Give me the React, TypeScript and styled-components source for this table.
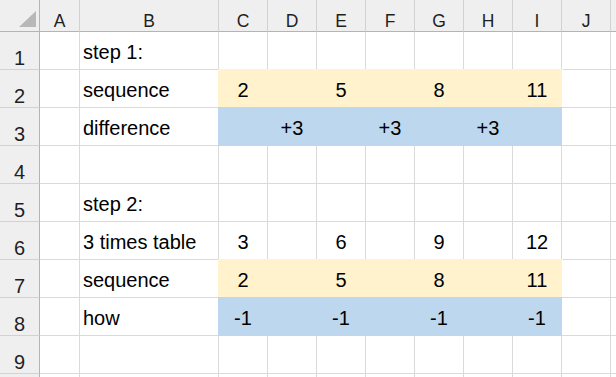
import React from 'react';
import styled, { createGlobalStyle } from 'styled-components';

const GlobalStyle = createGlobalStyle`
  html, body {
    margin: 0;
    padding: 0;
    background: #ffffff;
    overflow: hidden;
  }
  body {
    font-family: "Liberation Sans", Arial, sans-serif;
  }
`;

const GRID = '#dadada';
const HEAD_BG = '#efefef';
const HEAD_LINE = '#d2d2d2';
const HEAD_EDGE = '#b4b4b4';

const fills = {
  yellow: '#fff2cc',
  blue: '#bdd7ee',
};

type Fill = keyof typeof fills;

const Sheet = styled.div`
  display: grid;
  grid-template-columns: 40px 40px 139px repeat(9, 49px);
  grid-template-rows: 32px repeat(10, 38px);
  width: 616px;
  height: 377px;
  overflow: hidden;
  color: #000;
`;

const Corner = styled.div`
  display: flex;
  align-items: flex-start;
  justify-content: flex-start;
  background: ${HEAD_BG};
  border-right: 1px solid ${HEAD_EDGE};
  border-bottom: 1px solid ${HEAD_EDGE};
  box-sizing: border-box;

  svg {
    display: block;
  }
`;

const ColHead = styled.div`
  display: flex;
  align-items: flex-end;
  justify-content: center;
  padding-bottom: 1px;
  box-sizing: border-box;
  background: ${HEAD_BG};
  border-right: 1px solid ${HEAD_LINE};
  border-bottom: 1px solid ${HEAD_EDGE};
  font-size: 17.5px;
  line-height: 17.5px;
  color: #1f1f1f;
`;

const RowHead = styled.div`
  display: flex;
  align-items: flex-end;
  justify-content: center;
  padding-bottom: 1px;
  box-sizing: border-box;
  background: ${HEAD_BG};
  border-right: 1px solid ${HEAD_EDGE};
  border-bottom: 1px solid ${HEAD_LINE};
  font-size: 20px;
  line-height: 20px;
  color: #1f1f1f;
`;

const Cell = styled.div<{ $fill?: Fill; $center?: boolean }>`
  display: flex;
  align-items: flex-end;
  justify-content: ${({ $center }) => ($center ? 'center' : 'flex-start')};
  padding: 0 0 7px ${({ $center }) => ($center ? '0' : '3px')};
  box-sizing: border-box;
  white-space: nowrap;
  font-size: 20px;
  line-height: 20px;
  background: ${({ $fill }) => ($fill ? fills[$fill] : '#ffffff')};
  border-right: 1px solid ${({ $fill }) => ($fill ? fills[$fill] : GRID)};
  border-bottom: 1px solid ${({ $fill }) => ($fill ? fills[$fill] : GRID)};
  box-shadow: ${({ $fill }) => ($fill ? `0 0 0 1px ${fills[$fill]}` : 'none')};
`;

const columns = ['A', 'B', 'C', 'D', 'E', 'F', 'G', 'H', 'I', 'J', 'K'];

interface RowData {
  label?: string;
  values?: Record<string, string>;
  fill?: Fill;
}

const rows: RowData[] = [
  { label: 'step 1:' },
  { label: 'sequence', values: { C: '2', E: '5', G: '8', I: '11' }, fill: 'yellow' },
  { label: 'difference', values: { D: '+3', F: '+3', H: '+3' }, fill: 'blue' },
  {},
  { label: 'step 2:' },
  { label: '3 times table', values: { C: '3', E: '6', G: '9', I: '12' } },
  { label: 'sequence', values: { C: '2', E: '5', G: '8', I: '11' }, fill: 'yellow' },
  { label: 'how', values: { C: '-1', E: '-1', G: '-1', I: '-1' }, fill: 'blue' },
  {},
  {},
];

const filled = ['C', 'D', 'E', 'F', 'G', 'H', 'I'];

export default function App() {
  return (
    <>
      <GlobalStyle />
      <Sheet>
        <Corner>
          <svg width="39" height="31" viewBox="0 0 39 31">
            <polygon points="19,27 36,27 36,11" fill="#b8b8b8" />
          </svg>
        </Corner>
        {columns.map((c) => (
          <ColHead key={c}>{c === 'K' ? '' : c}</ColHead>
        ))}
        {rows.map((row, i) => (
          <React.Fragment key={i}>
            {/* the last row only peeks in at the bottom edge, its number is out of view */}
            <RowHead>{i < 9 ? i + 1 : ''}</RowHead>
            {columns.map((c) => {
              if (c === 'B') return <Cell key={c}>{row.label}</Cell>;
              const fill = row.fill && filled.includes(c) ? row.fill : undefined;
              return (
                <Cell key={c} $center $fill={fill}>
                  {row.values?.[c]}
                </Cell>
              );
            })}
          </React.Fragment>
        ))}
      </Sheet>
    </>
  );
}
